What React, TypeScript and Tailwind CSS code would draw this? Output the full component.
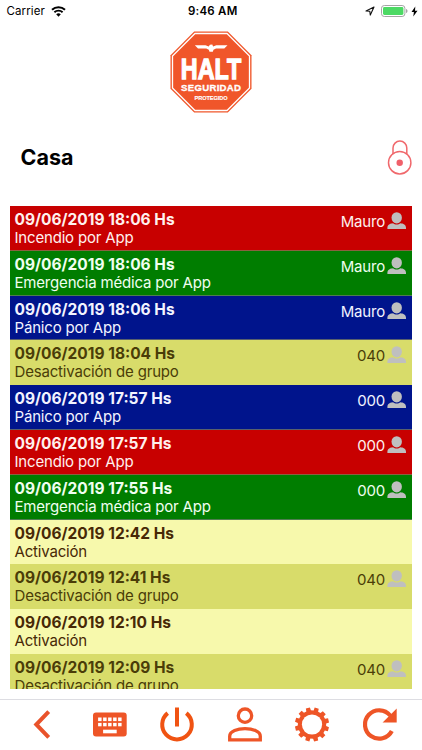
import type { ReactNode } from "react";

type EventKind = "fire" | "medical" | "panic" | "disarm" | "arm";

interface AlarmEvent {
  date: string;
  desc: string;
  kind: EventKind;
  user?: string;
}

const events: AlarmEvent[] = [
  { date: "09/06/2019 18:06 Hs", desc: "Incendio por App", kind: "fire", user: "Mauro" },
  { date: "09/06/2019 18:06 Hs", desc: "Emergencia médica por App", kind: "medical", user: "Mauro" },
  { date: "09/06/2019 18:06 Hs", desc: "Pánico por App", kind: "panic", user: "Mauro" },
  { date: "09/06/2019 18:04 Hs", desc: "Desactivación de grupo", kind: "disarm", user: "040" },
  { date: "09/06/2019 17:57 Hs", desc: "Pánico por App", kind: "panic", user: "000" },
  { date: "09/06/2019 17:57 Hs", desc: "Incendio por App", kind: "fire", user: "000" },
  { date: "09/06/2019 17:55 Hs", desc: "Emergencia médica por App", kind: "medical", user: "000" },
  { date: "09/06/2019 12:42 Hs", desc: "Activación", kind: "arm" },
  { date: "09/06/2019 12:41 Hs", desc: "Desactivación de grupo", kind: "disarm", user: "040" },
  { date: "09/06/2019 12:10 Hs", desc: "Activación", kind: "arm" },
  { date: "09/06/2019 12:09 Hs", desc: "Desactivación de grupo", kind: "disarm", user: "040" },
];

const kindStyles: Record<EventKind, string> = {
  fire: "bg-[#c80000] text-[#fff0ee] border-[#8a6040]",
  medical: "bg-[#007d00] text-[#f0fff0] border-[#4f7d50]",
  panic: "bg-[#00148c] text-[#f2f3ff] border-[#59606c]",
  disarm: "bg-[#d8dc6a] text-[#4a3c08] border-[#d8dc6a]",
  arm: "bg-[#f7f9ac] text-[#472806] border-[#f7f9ac]",
};

export default function App() {
  return (
    <div className="flex h-[750px] w-[422px] flex-col overflow-hidden bg-white font-['Inter','Liberation_Sans',sans-serif] text-black">
      <StatusBar />
      <div className="flex h-[95px] shrink-0 justify-center pt-[9px]">
        <Logo />
      </div>
      <header className="flex h-[89px] shrink-0 items-start justify-between pt-[23px] pr-[10px] pl-[20.5px]">
        <h1 className="mt-[2px] text-[21.5px] leading-[30px] font-bold">Casa</h1>
        <LockIcon />
      </header>
      <main className="mr-[10px] ml-[10px] h-[483px] shrink-0 overflow-hidden">
        {events.map((event, i) => (
          <EventRow key={i} event={event} />
        ))}
      </main>
      <NavBar />
    </div>
  );
}

function StatusBar() {
  return (
    <div className="grid h-[22px] shrink-0 grid-cols-3 items-center pr-[4px] pl-[6.5px] text-[11.5px] leading-[22px]">
      <div className="flex items-center gap-[6px]">
        <span className="tracking-[0.1px]">Carrier</span>
        <svg width="15" height="11" viewBox="0 0 15 11">
          <path d="M1 3.8a9.3 9.3 0 0 1 13 0" fill="none" stroke="#000" strokeWidth="2" />
          <path d="M3.4 6.3a5.9 5.9 0 0 1 8.2 0" fill="none" stroke="#000" strokeWidth="1.9" />
          <path d="M7.5 10.7 5.2 8.3a3.3 3.3 0 0 1 4.6 0z" />
        </svg>
      </div>
      <div className="pl-[1px] text-center font-semibold tracking-[0.25px]">9:46 AM</div>
      <div className="flex items-center justify-end gap-[3px]">
        <svg className="mr-[3px]" width="10" height="10" viewBox="0 0 10 10">
          <path d="M1 5 9 1 5.3 9.1 4.8 5.3z" fill="none" stroke="#111" strokeWidth="1.1" strokeLinejoin="round" />
        </svg>
        <svg width="27" height="12" viewBox="0 0 27 12">
          <rect x="0.5" y="0.5" width="23.4" height="11" rx="2.8" fill="#fff" stroke="#a5a5a5" />
          <rect x="2" y="2" width="20.4" height="8" rx="1.4" fill="#4cd964" />
          <path d="M25 4v4c1-.4 1.5-1.1 1.5-2S26 4.4 25 4z" fill="#a5a5a5" />
        </svg>
        <svg width="7" height="11" viewBox="0 0 7 11">
          <path d="M4.3.5.5 6h2.4L2.3 10.5 6.5 4.7H4z" />
        </svg>
      </div>
    </div>
  );
}

function Logo() {
  return (
    <svg width="82" height="82" viewBox="0 0 82 82">
      <polygon points="24.2,.5 57.8,.5 81.5,24.2 81.5,57.8 57.8,81.5 24.2,81.5 .5,57.8 .5,24.2" fill="#f0562a" />
      <polygon points="25,2.5 57,2.5 79.5,25 79.5,57 57,79.5 25,79.5 2.500,57 2.5,25" fill="none" stroke="#fff" strokeWidth="1.3" />
      <path d="M24.8 14.2h10.7l3.2 1.4 1.2-1.9 2.4-.2.8 2 3.2-1.3h11.2l-3.200 3.300H46l-2.500 1.200-.7 2h-3.300l-.7-2-2.500-1.200H28z" fill="#fff" />
      <g fill="#fff" textAnchor="middle" className="font-['Liberation_Sans',sans-serif] font-bold">
        <text transform="translate(41 48.4) scale(.79 1)" fontSize="29.5" stroke="#fff" strokeWidth="1.3">HALT</text>
        <text x="41" y="60" fontSize="9.6" textLength="60" stroke="#fff" strokeWidth=".3">SEGURIDAD</text>
        <text x="41" y="68.700" fontSize="5.6" textLength="33" stroke="#fff" strokeWidth=".15">PROTEGIDO</text>
      </g>
    </svg>
  );
}

function LockIcon() {
  return (
    <svg width="25" height="36" viewBox="0 0 25 36" fill="none" stroke="#f0686c" strokeWidth="1.5">
      <path d="M6 14V8a6.9 6.9 0 0 1 13.8 0V14" />
      <circle cx="12.7" cy="22.7" r="11.2" />
      <circle cx="12.7" cy="22.7" r="3.2" fill="#f0606a" stroke="none" />
    </svg>
  );
}

function EventRow({ event }: { event: AlarmEvent }) {
  return (
    <div className={`flex h-[44.8px] justify-between border-b pt-[4px] pr-[5px] pl-[4.5px] ${kindStyles[event.kind]}`}>
      <div>
        <p className="text-[15.5px] leading-[19px] font-bold whitespace-nowrap">{event.date}</p>
        <p className="text-[15px] leading-[18px] tracking-[-0.18px] whitespace-nowrap">{event.desc}</p>
      </div>
      {event.user && (
        <div className="flex items-start gap-[2px]">
          <span className="pt-[2px] text-[15px] leading-[20px] tracking-[-0.2px]">{event.user}</span>
          <svg className="mt-[2px]" width="20" height="17" viewBox="0 0 20 17" fill="#bfbfbf">
            <ellipse cx="9.700" cy="5.8" rx="5.200" ry="5.6" />
            <path d="M.4 17v-1.2c0-3 2.8-4.3 5.6-4.5 2 1.6 5.4 1.6 7.4 0 2.8.2 5.600 1.5 5.600 4.5V17z" />
          </svg>
        </div>
      )}
    </div>
  );
}

// toothed outline, listed clockwise from the top
const gearPoints = Array.from({ length: 12 }, (_, i) =>
  [
    [-9.5, 14.2],
    [-7, 17.2],
    [7, 17.2],
    [9.5, 14.2],
  ].map(([deg, r]) => {
    const a = ((i * 30 + deg + 16) * Math.PI) / 180;
    return `${(18 + r * Math.sin(a)).toFixed(2)},${(18 - r * Math.cos(a)).toFixed(2)}`;
  }).join(" "),
).join(" ");

function NavBar() {
  return (
    <nav className="mt-[10px] grid h-[51px] shrink-0 grid-cols-6 border-t border-[#dddde2] px-[8.5px] pt-[7px]">
      <NavButton label="Volver">
        <path d="M24.7 4.7 12.3 17.5l12.4 12.8" fill="none" stroke="#e9532b" strokeWidth="4" />
      </NavButton>
      <NavButton label="Teclado">
        <rect x="1" y="5.5" width="33.7" height="24" rx="3" fill="#ee5527" />
        {[0, 1, 2, 3, 4].map((c) => (
          <g key={c} fill="#fff">
            <rect x={6.1 + c * 5} y="10.5" width="3.5" height="3.6" />
            <rect x={6.1 + c * 5} y="15.9" width="3.5" height="3.4" />
          </g>
        ))}
        <rect x="11.1" y="22.7" width="13.6" height="3.6" fill="#fff" />
      </NavButton>
      <NavButton label="Armar">
        <path d="M8.7 6.1a14.8 14.8 0 1 0 18.6 0M18 .5v19" fill="none" stroke="#f05312" strokeWidth="4" />
      </NavButton>
      <NavButton label="Usuario">
        <g fill="none" stroke="#ee5527" strokeWidth="3.3">
          <circle cx="18" cy="8.7" r="6.7" />
          <path d="M2.7 32.8v-3.6c0-5.1 8-7.5 15.3-7.5s15.3 2.4 15.3 7.5v3.6z" />
        </g>
      </NavButton>
      <NavButton label="Ajustes">
        <g transform="translate(0 -.5)">
          <polygon points={gearPoints} fill="#ee5527" />
          <circle cx="18" cy="18" r="10.1" fill="#fff" />
        </g>
      </NavButton>
      <NavButton label="Actualizar">
        <path d="M29.8 24A14.2 14.2 0 1 1 28.2 8.500" fill="none" stroke="#ee5527" strokeWidth="4.2" />
        <path d="M34.7 1.5v14H20.6z" fill="#ee5527" />
      </NavButton>
    </nav>
  );
}

function NavButton({ label, children }: { label: string; children: ReactNode }) {
  return (
    <button type="button" aria-label={label} className="flex justify-center">
      <svg width="36" height="36" viewBox="0 0 36 36">
        {children}
      </svg>
    </button>
  );
}
